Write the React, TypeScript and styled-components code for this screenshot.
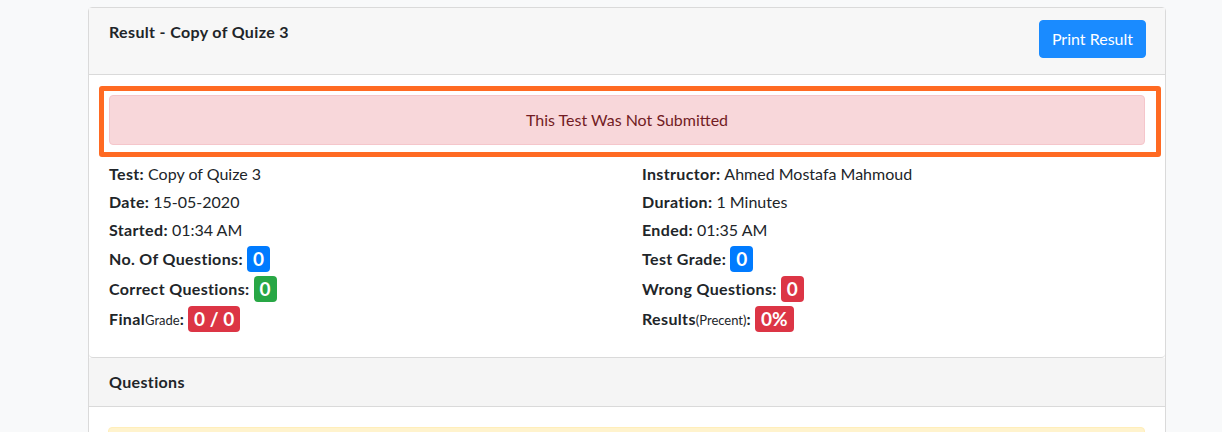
import React from "react";
import styled, { createGlobalStyle } from "styled-components";

const GlobalStyle = createGlobalStyle`
  body {
    margin: 0;
    background: #f8f9fa;
    font-family: "Segoe UI", Lato, "Noto Sans", sans-serif;
    font-size: 16px;
    line-height: 24px;
    color: #212529;
  }
`;

const Page = styled.div`
  padding: 7px 56px 0 88px;
  height: 432px;
  box-sizing: border-box;
  overflow: hidden;
`;

const Card = styled.div`
  background: #fff;
  border: 1px solid #dadada;
  border-radius: 4px 4px 0 0;
`;

const CardHeader = styled.div`
  display: flex;
  justify-content: space-between;
  align-items: flex-start;
  background: #f7f7f7;
  padding: 12px 19px 16px 20px;
  border-bottom: 1px solid #dadada;
`;

const SectionHeader = styled.div`
  background: #f5f5f5;
  padding: 12px 20px;
  border-bottom: 1px solid #dadada;
`;

const Title = styled.div`
  font-weight: 700;
  letter-spacing: 0.35px;
`;

const PrintButton = styled.button`
  font-family: inherit;
  font-size: 16px;
  line-height: 24px;
  color: #fff;
  background: #1a8bff;
  border: 1px solid #1a8bff;
  border-radius: 4px;
  padding: 6px 12px;
  cursor: pointer;
`;

const CardBody = styled.div`
  padding: 20px 20px 25px;
  border-bottom: 1px solid #dadada;
  border-radius: 0 0 4px 4px;
`;

const QuestionsBody = styled.div`
  padding: 20px 20px 0 19px;
`;

const HighlightFrame = styled.div`
  margin: -9px -16px 0 -10px;
  padding: 4px 11px 7px 5px;
  border: 5px solid #ff6a22;
  border-radius: 3px;
`;

const Alert = styled.div<{ $tone: "danger" | "warning" }>`
  padding: 12px 20px;
  border-radius: 4px;
  text-align: center;
  border: 1px solid ${(p) => (p.$tone === "danger" ? "#f5c6cb" : "#ffeeba")};
  background: ${(p) => (p.$tone === "danger" ? "#f8d7da" : "#fff3cd")};
  color: ${(p) => (p.$tone === "danger" ? "#721c24" : "#856404")};
  min-height: 24px;
`;

const InfoGrid = styled.div`
  display: grid;
  grid-template-columns: 1fr 1fr;
  column-gap: 30px;
  margin-top: 5px;
`;

const Column = styled.div`
  display: flex;
  flex-direction: column;
  gap: 4px;
`;

const Row = styled.div`
  display: flex;
  align-items: center;
  min-height: 24px;
  white-space: nowrap;
`;

const Label = styled.b`
  font-weight: 700;
  letter-spacing: 0.35px;
`;

const Small = styled.span`
  font-size: 13px;
  font-weight: 400;
  letter-spacing: 0;
`;

const Value = styled.span`
  margin-left: 4px;
`;

const Badge = styled.span<{ $color: string }>`
  display: inline-block;
  margin-left: 4px;
  padding: 0 6px;
  height: 26px;
  line-height: 26px;
  font-size: 19px;
  font-weight: 700;
  color: #fff;
  border-radius: 4px;
  background: ${(p) => p.$color};
`;

const BLUE = "#007bff";
const GREEN = "#28a745";
const RED = "#dc3545";

export default function App() {
  return (
    <Page>
      <GlobalStyle />
      <Card>
        <CardHeader>
          <Title>Result - Copy of Quize 3</Title>
          <PrintButton>Print Result</PrintButton>
        </CardHeader>
        <CardBody>
          <HighlightFrame>
            <Alert $tone="danger">This Test Was Not Submitted</Alert>
          </HighlightFrame>
          <InfoGrid>
            <Column>
              <Row>
                <Label>Test:</Label>
                <Value>Copy of Quize 3</Value>
              </Row>
              <Row>
                <Label>Date:</Label>
                <Value>15-05-2020</Value>
              </Row>
              <Row>
                <Label>Started:</Label>
                <Value>01:34 AM</Value>
              </Row>
              <Row>
                <Label>No. Of Questions:</Label>
                <Badge $color={BLUE}>0</Badge>
              </Row>
              <Row>
                <Label>Correct Questions:</Label>
                <Badge $color={GREEN}>0</Badge>
              </Row>
              <Row>
                <Label>
                  Final<Small>Grade</Small>:
                </Label>
                <Badge $color={RED}>0 / 0</Badge>
              </Row>
            </Column>
            <Column>
              <Row>
                <Label>Instructor:</Label>
                <Value>Ahmed Mostafa Mahmoud</Value>
              </Row>
              <Row>
                <Label>Duration:</Label>
                <Value>1 Minutes</Value>
              </Row>
              <Row>
                <Label>Ended:</Label>
                <Value>01:35 AM</Value>
              </Row>
              <Row>
                <Label>Test Grade:</Label>
                <Badge $color={BLUE}>0</Badge>
              </Row>
              <Row>
                <Label>Wrong Questions:</Label>
                <Badge $color={RED}>0</Badge>
              </Row>
              <Row>
                <Label>
                  Results<Small>(Precent)</Small>:
                </Label>
                <Badge $color={RED}>0%</Badge>
              </Row>
            </Column>
          </InfoGrid>
        </CardBody>
        <SectionHeader>
          <Title>Questions</Title>
        </SectionHeader>
        <QuestionsBody>
          <Alert $tone="warning" />
        </QuestionsBody>
      </Card>
    </Page>
  );
}
